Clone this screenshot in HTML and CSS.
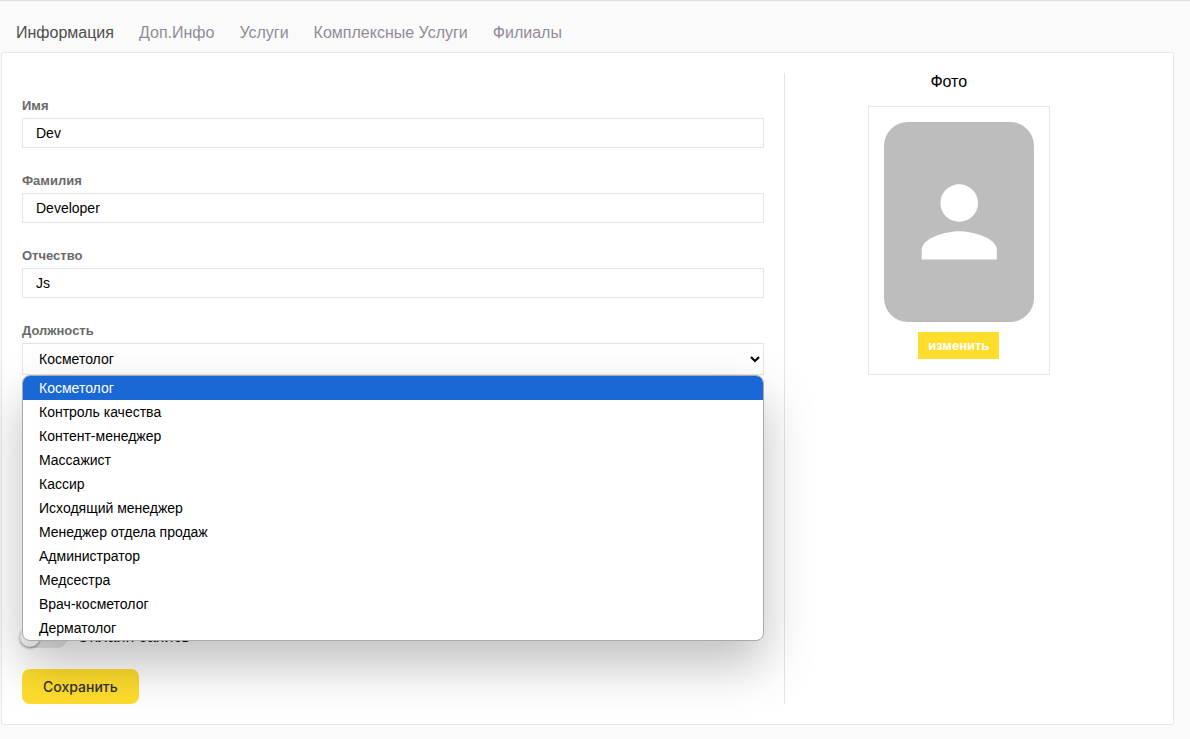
FILE: index.html
```html
<!DOCTYPE html>
<html lang="ru">
<head>
<meta charset="utf-8">
<meta name="viewport" content="width=device-width, initial-scale=1">
<title>Информация</title>
<link rel="stylesheet" href="styles.css">
</head>
<body>
<nav class="tabs">
  <a class="tab tab-active" href="#info" aria-current="page">Информация</a>
  <a class="tab" href="#extra">Доп.Инфо</a>
  <a class="tab" href="#services">Услуги</a>
  <a class="tab" href="#complex">Комплексные Услуги</a>
  <a class="tab" href="#branches">Филиалы</a>
</nav>
<main class="card">
  <form class="form">
    <div class="field">
      <label class="label" for="first-name">Имя</label>
      <input class="input" id="first-name" type="text" value="Dev">
    </div>
    <div class="field">
      <label class="label" for="last-name">Фамилия</label>
      <input class="input" id="last-name" type="text" value="Developer">
    </div>
    <div class="field">
      <label class="label" for="middle-name">Отчество</label>
      <input class="input" id="middle-name" type="text" value="Js">
    </div>
    <div class="field">
      <label class="label" for="position">Должность</label>
      <div class="dropdown">
        <select class="input select" id="position">
          <option>Косметолог</option>
        </select>
        <ul class="menu" role="listbox" aria-label="Должность">
          <li class="option option-selected" role="option" aria-selected="true">Косметолог</li>
          <li class="option" role="option">Контроль качества</li>
          <li class="option" role="option">Контент-менеджер</li>
          <li class="option" role="option">Массажист</li>
          <li class="option" role="option">Кассир</li>
          <li class="option" role="option">Исходящий менеджер</li>
          <li class="option" role="option">Менеджер отдела продаж</li>
          <li class="option" role="option">Администратор</li>
          <li class="option" role="option">Медсестра</li>
          <li class="option" role="option">Врач-косметолог</li>
          <li class="option" role="option">Дерматолог</li>
        </ul>
      </div>
    </div>
    <div class="switch-row">
      <input class="switch" id="online" type="checkbox">
      <label class="switch-label" for="online">Онлайн-запись</label>
    </div>
    <button class="save" type="submit">Сохранить</button>
  </form>
  <aside class="photo">
    <h2 class="photo-title">Фото</h2>
    <div class="photo-box">
      <svg class="avatar" viewBox="0 0 150 200" role="img" aria-label="Нет фото">
        <rect width="150" height="200" fill="#bdbdbd"/>
        <circle cx="75.2" cy="81" r="18.8" fill="#fff"/>
        <path d="M37.7 137.5v-9.4c0-12.500 25-18.800 37.500-18.800s37.600 6.300 37.600 18.800v9.400z" fill="#fff"/>
      </svg>
      <button class="change" type="button">изменить</button>
    </div>
  </aside>
</main>
</body>
</html>
```
FILE: styles.css
```css
* {
  box-sizing: border-box;
}

body {
  margin: 0;
  border-top: 1px solid #dedede;
  background: #fafafa;
  color: #000;
  font-family: "Liberation Sans", Arial, sans-serif;
}

.tabs {
  display: flex;
  gap: 25px;
  padding: 22px 16px 9px;
}

.tab {
  color: #918c99;
  font-size: 16px;
  line-height: 20px;
  text-decoration: none;
}

.tab-active {
  color: #4d4d4d;
}

.card {
  display: grid;
  grid-template-columns: 207fr 100fr;
  margin: 0 16px 14px 1px;
  padding: 20px;
  border: 1px solid #e4e7ea;
  border-radius: 2px;
  background: #fff;
}

.form {
  display: flex;
  flex-direction: column;
  align-items: stretch;
  padding: 25px 20px 0 0;
  border-right: 1px solid #e4e5e7;
}

.field {
  display: flex;
  flex-direction: column;
  gap: 4px;
  margin-bottom: 25px;
}

.label {
  color: #6a6a6a;
  font-size: 13px;
  font-weight: 700;
  line-height: 16px;
}

.input {
  width: 100%;
  height: 30px;
  padding: 0 13px;
  border: 1px solid #e4e5e7;
  border-radius: 0;
  background: #fff;
  color: #000;
  font-family: inherit;
  font-size: 14px;
}

.dropdown {
  position: relative;
}

.select {
  display: block;
  height: 32px;
  padding: 0 0 0 12px;
}

.menu {
  position: absolute;
  z-index: 1;
  top: 100%;
  left: 0;
  right: 0;
  margin: 0;
  padding: 0;
  border: 1px solid #a9a9a9;
  border-radius: 8px;
  overflow: hidden;
  background: #fff;
  box-shadow: 0 24px 50px rgba(0, 0, 0, 0.25);
  list-style: none;
}

.option {
  padding: 0 16px;
  font-size: 14px;
  line-height: 24px;
}

.option-selected {
  background: #1a67d6;
  color: #fff;
}

.switch-row {
  display: flex;
  align-items: center;
  gap: 9px;
  margin-top: 225px;
  margin-bottom: 21px;
}

.switch {
  display: flex;
  align-items: center;
  width: 46px;
  height: 23px;
  margin: 0;
  border-radius: 12px;
  background: #e6e6e6;
  appearance: none;
}

.switch::before {
  width: 20px;
  height: 20px;
  margin-left: -2px;
  border-radius: 50%;
  background: #fafafa;
  box-shadow: 0 1px 3px rgba(0, 0, 0, 0.5);
  content: "";
}

.switch-label {
  font-size: 16px;
  line-height: 23px;
}

.save {
  align-self: flex-start;
  height: 35px;
  padding: 0 21px;
  border: 0;
  border-radius: 8px;
  background: #ffdd2d;
  color: #333;
  font-family: Inter, sans-serif;
  font-size: 14px;
  font-weight: 500;
}

.photo {
  display: flex;
  flex-direction: column;
  align-items: center;
  gap: 15px;
  padding-right: 20px;
}

.photo-title {
  margin: 0;
  padding-right: 20px;
  font-size: 16px;
  font-weight: 400;
  line-height: 18px;
}

.photo-box {
  display: flex;
  flex-direction: column;
  align-items: center;
  gap: 10px;
  padding: 15px;
  border: 1px solid #e7e7e7;
}

.avatar {
  width: 150px;
  height: 200px;
  border-radius: 24px;
}

.change {
  height: 27px;
  padding: 0 10px;
  border: 0;
  background: #ffdd2d;
  color: #fff;
  font-family: inherit;
  font-size: 13px;
  font-weight: 700;
}
```
